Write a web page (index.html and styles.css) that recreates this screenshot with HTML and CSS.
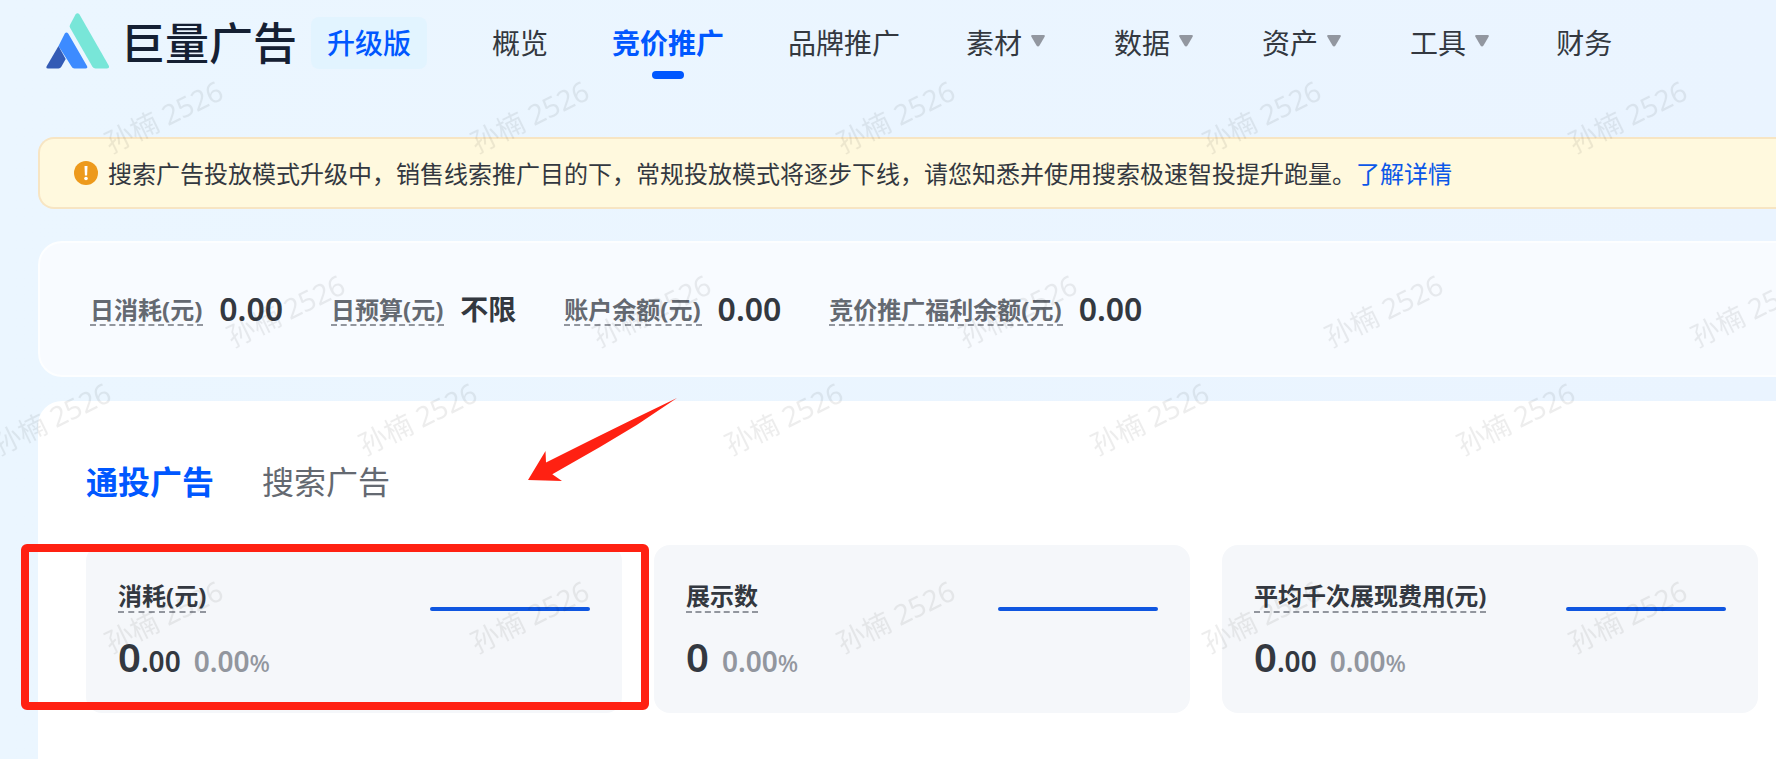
FILE: index.html
```
<!DOCTYPE html>
<html lang="zh-CN">
<head>
    <meta charset="UTF-8">
    <title>巨量广告</title>
    <link rel="stylesheet" href="styles.css">
</head>
<body>
    <header class="header">
        <a class="logo" href="#">
            <svg class="logo-mark" viewBox="0 0 64 56" aria-hidden="true">
                <path fill="#78e6d8" d="M29.500 1.500Q31.500-1.200 33.500 1.500L62.700 52.500Q64 55.500 61 55.500H49.500Q47.500 55.500 46.300 53.500L24.200 15Q23.300 13.200 24.200 11.500Z"/>
                <path fill="#3d8bff" d="M18.800 20.500Q20.500 18.400 22.200 20.500L41 53Q42 55.500 39.500 55.500H28.500Q26.500 55.500 25.500 53.500L12.500 33Z"/>
                <path fill="#335bb5" d="M12.500 33L19.700 46L15.500 53.500Q14.300 55.500 12.500 55.500H2Q-.5 55.500 .8 53Z"/>
            </svg>
            <span class="logo-text">巨量广告</span>
        </a>
        <span class="badge">升级版</span>
        <nav class="nav">
            <a class="nav-item" href="#">概览</a>
            <a class="nav-item nav-active" href="#">竞价推广</a>
            <a class="nav-item" href="#">品牌推广</a>
            <a class="nav-item nav-drop" href="#">素材<svg class="caret" viewBox="0 0 14 12" aria-hidden="true"><path d="M1.500 0H12.500Q14.500 0 13.600 1.800L8.500 10.500Q7 12.500 5.500 10.500L.4 1.800Q-.5 0 1.500 0Z"/></svg></a>
            <a class="nav-item nav-drop" href="#">数据<svg class="caret" viewBox="0 0 14 12" aria-hidden="true"><path d="M1.500 0H12.500Q14.500 0 13.600 1.800L8.500 10.500Q7 12.500 5.500 10.500L.4 1.800Q-.5 0 1.500 0Z"/></svg></a>
            <a class="nav-item nav-drop" href="#">资产<svg class="caret" viewBox="0 0 14 12" aria-hidden="true"><path d="M1.500 0H12.500Q14.500 0 13.600 1.800L8.500 10.500Q7 12.500 5.500 10.500L.4 1.800Q-.5 0 1.500 0Z"/></svg></a>
            <a class="nav-item nav-drop" href="#">工具<svg class="caret" viewBox="0 0 14 12" aria-hidden="true"><path d="M1.500 0H12.500Q14.500 0 13.600 1.800L8.500 10.500Q7 12.500 5.500 10.500L.4 1.800Q-.5 0 1.500 0Z"/></svg></a>
            <a class="nav-item" href="#">财务</a>
        </nav>
    </header>

    <main class="content">
        <div class="notice">
            <svg class="notice-icon" viewBox="0 0 24 24" aria-hidden="true">
                <circle cx="12" cy="12" r="12" fill="#ed9a1c"/>
                <path d="M10.500 5H13.500L13.100 14.500H10.900Z" fill="#fff"/>
                <circle cx="12" cy="17.500" r="1.800" fill="#fff"/>
            </svg>
            <p class="notice-text">搜索广告投放模式升级中，销售线索推广目的下，常规投放模式将逐步下线，请您知悉并使用搜索极速智投提升跑量。<a href="#">了解详情</a></p>
        </div>

        <section class="summary">
            <div class="summary-item"><span class="summary-label">日消耗(元)</span><b class="summary-value">0.00</b></div>
            <div class="summary-item"><span class="summary-label">日预算(元)</span><b class="summary-value summary-word">不限</b></div>
            <div class="summary-item"><span class="summary-label">账户余额(元)</span><b class="summary-value">0.00</b></div>
            <div class="summary-item"><span class="summary-label">竞价推广福利余额(元)</span><b class="summary-value">0.00</b></div>
        </section>

        <section class="panel">
            <div class="tabs" role="tablist">
                <button class="tab tab-active" role="tab" aria-selected="true">通投广告</button>
                <button class="tab" role="tab" aria-selected="false">搜索广告</button>
            </div>
            <div class="cards">
                <div class="card card-marked">
                    <div>
                        <h2 class="card-title">消耗(元)</h2>
                        <div class="card-data"><span class="num">0</span><span class="decimal">.00</span><span class="rate">0.00</span><span class="percent">%</span></div>
                    </div>
                    <div class="trend"></div>
                </div>
                <div class="card">
                    <div>
                        <h2 class="card-title">展示数</h2>
                        <div class="card-data"><span class="num">0</span><span class="rate">0.00</span><span class="percent">%</span></div>
                    </div>
                    <div class="trend"></div>
                </div>
                <div class="card">
                    <div>
                        <h2 class="card-title">平均千次展现费用(元)</h2>
                        <div class="card-data"><span class="num">0</span><span class="decimal">.00</span><span class="rate">0.00</span><span class="percent">%</span></div>
                    </div>
                    <div class="trend"></div>
                </div>
            </div>
            <svg class="arrow" viewBox="0 0 150 84" aria-hidden="true">
                <path fill="#ff2112" d="M0 82L17.500 53L18 64.500L65 41L102 22.700L149 0L108.700 27L72 49L24.300 76.300L34 83Z"/>
            </svg>
        </section>
    </main>

    <!-- 水印 -->
    <svg class="watermark" aria-hidden="true">
        <defs>
            <pattern id="mark" width="366" height="500" patternUnits="userSpaceOnUse" patternTransform="translate(-15 60)">
                <text transform="translate(126 94) rotate(-26)">孙楠 2526</text>
                <text transform="translate(248 288) rotate(-26)">孙楠 2526</text>
                <text transform="translate(14 396) rotate(-26)">孙楠 2526</text>
            </pattern>
        </defs>
        <rect width="100%" height="100%" fill="url(#mark)"/>
    </svg>
</body>
</html>
```
FILE: styles.css
```
* {
    box-sizing: border-box;
}

body {
    position: relative;
    display: flex;
    flex-direction: column;
    min-height: 100vh;
    margin: 0;
    overflow: hidden;
    background: linear-gradient(90deg, #ebf6ff, #eaf4ff);
    color: #333840;
    font-family: "Noto Sans", "Noto Sans CJK SC", sans-serif;
    font-size: 24px;
}

a {
    color: #0b57e8;
    text-decoration: none;
}

.header {
    display: flex;
    align-items: center;
    height: 86px;
    padding-left: 46px;
}

.logo {
    display: flex;
    align-items: center;
    gap: 11px;
}

.logo-mark {
    width: 64px;
    height: 56px;
    margin-bottom: 4px;
}

.logo-text {
    color: #152033;
    font-size: 44px;
    font-weight: 500;
    line-height: 56px;
}

.badge {
    margin-left: 14px;
    padding: 0 16px;
    border-radius: 8px;
    background-color: #e2f4ff;
    color: #0057ff;
    font-size: 28px;
    font-weight: 500;
    line-height: 52px;
}

.nav {
    display: flex;
    gap: 64px;
    margin-left: 65px;
}

.nav-item {
    position: relative;
    color: #333840;
    font-size: 28px;
    line-height: 86px;
    white-space: nowrap;
}

.nav-active {
    color: #0057ff;
    font-weight: bold;
}

.nav-active::after {
    content: "";
    position: absolute;
    left: 50%;
    bottom: 7px;
    width: 32px;
    height: 8px;
    margin-left: -16px;
    border-radius: 4px;
    background-color: #0057ff;
}

.nav-drop {
    display: flex;
    align-items: center;
    gap: 9px;
    padding: 0 3px 0 2px;
}

.caret {
    width: 14px;
    height: 12px;
    margin-bottom: 4px;
    fill: #9297a0;
}

.content {
    display: flex;
    flex: 1;
    flex-direction: column;
    padding-left: 38px;
}

.notice {
    display: flex;
    align-items: center;
    gap: 10px;
    margin-top: 51px;
    padding: 16px 34px;
    border: 2px solid #f7e5c3;
    border-right: none;
    border-radius: 16px 0 0 16px;
    background-color: #fff9de;
}

.notice-icon {
    width: 24px;
    height: 24px;
}

.notice-text {
    margin: 0;
    padding-top: 2px;
    line-height: 34px;
}

.summary {
    display: flex;
    align-items: center;
    gap: 48px;
    margin-top: 32px;
    padding: 42px 50px;
    border: 2px solid #fdfeff;
    border-right: none;
    border-radius: 24px 0 0 24px;
    background-color: #f8fbff;
}

.summary-item {
    display: flex;
    align-items: center;
    gap: 16px;
    height: 48px;
}

.summary-label {
    padding: 4px 1px 0 0;
    border-bottom: 2px dashed #92969e;
    color: #646971;
    font-weight: bold;
    line-height: 28px;
}

.summary-value {
    font-size: 32px;
    font-weight: 600;
    line-height: 48px;
}

.summary-word {
    font-size: 28px;
    font-weight: bold;
}

.panel {
    position: relative;
    flex: 1;
    margin-top: 24px;
    padding: 60px 18px 46px 48px;
    border-radius: 24px 0 0 0;
    background-color: #fff;
}

.tabs {
    display: flex;
    gap: 48px;
}

.tab {
    padding: 0;
    border: none;
    background: none;
    color: #646971;
    font-family: inherit;
    font-size: 32px;
    line-height: 42px;
    cursor: pointer;
}

.tab-active {
    color: #0057ff;
    font-weight: bold;
}

.cards {
    display: grid;
    grid-template-columns: repeat(3, 1fr);
    gap: 32px;
    margin-top: 42px;
}

.card {
    position: relative;
    display: flex;
    justify-content: space-between;
    padding: 32px 32px 22px;
    border-radius: 16px;
    background-color: #f5f7fa;
}

.card-title {
    display: block;
    width: fit-content;
    margin: 0;
    padding-top: 4px;
    border-bottom: 2px dashed #92969e;
    font-size: 24px;
    line-height: 30px;
}

.card-data {
    display: flex;
    align-items: baseline;
    margin-top: 16px;
    font-weight: 600;
    line-height: 56px;
}

.num {
    font-size: 40px;
}

.decimal {
    font-size: 28px;
}

.rate {
    margin-left: 13px;
    color: #92969e;
    font-size: 28px;
}

.percent {
    color: #92969e;
    font-size: 24px;
    font-weight: 500;
}

.trend {
    width: 160px;
    height: 4px;
    margin-top: 30px;
    border-radius: 2px;
    background-color: #0f56e0;
}

.card-marked::after {
    content: "";
    position: absolute;
    z-index: 2;
    inset: -1px -27px 3px -65px;
    border: 8px solid #ff2112;
    border-radius: 6px;
}

.arrow {
    position: absolute;
    z-index: 2;
    left: 490px;
    top: -3px;
    width: 150px;
    height: 84px;
}

.watermark {
    position: absolute;
    z-index: 1;
    inset: 0;
    width: 100%;
    height: 100%;
    pointer-events: none;
}

.watermark text {
    fill: rgba(0, 0, 0, 0.07);
    font-size: 28px;
}
```
